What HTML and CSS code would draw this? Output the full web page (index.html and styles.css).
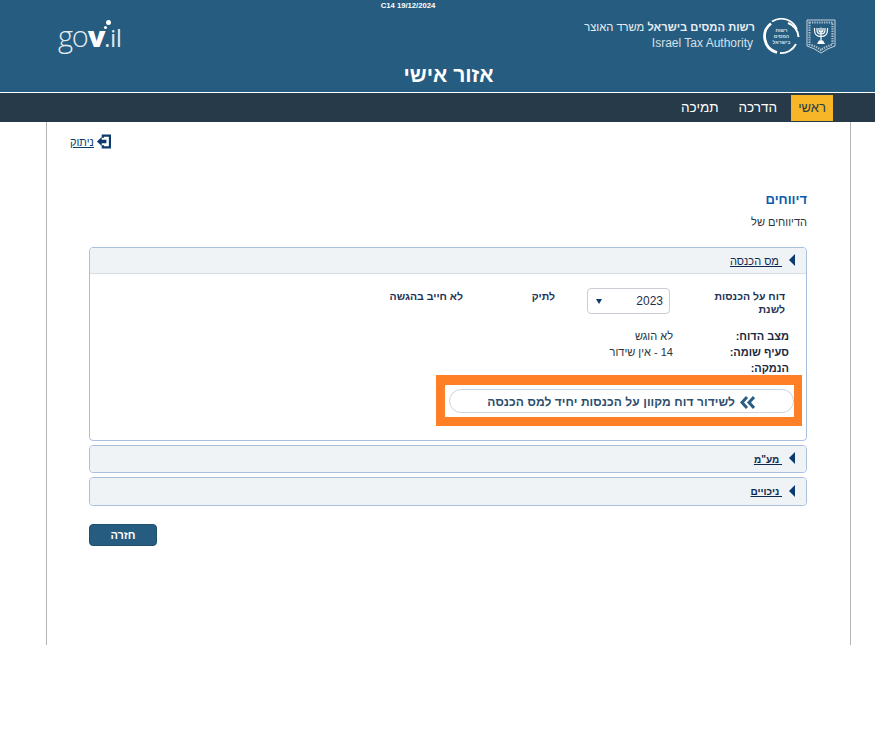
FILE: index.html
```html
<!DOCTYPE html>
<html lang="he" dir="rtl">
<head>
<meta charset="utf-8">
<title>אזור אישי</title>
<link rel="stylesheet" href="styles.css">
</head>
<body>
<header class="top">
  <div class="version" dir="ltr">C14 19/12/2024</div>
  <div class="brand">
    <div class="brand-right">
      <svg class="emblem" width="30" height="35" viewBox="0 0 30 35" aria-hidden="true">
        <path d="M1 1 H29 V27 Q22 29 15 34 Q8 29 1 27 Z" fill="none" stroke="#c3d2dd" stroke-width="1"/>
        <path d="M3.5 3.5 H26.5 V25.5 Q20 27.5 15 31 Q10 27.5 3.5 25.5 Z" fill="none" stroke="#a9bfce" stroke-width="2.2" stroke-dasharray="1.4 1"/>
        <path d="M8.5 9 V11 Q8.5 17.5 15 17.5 Q21.5 17.5 21.5 11 V9 M11 9 V11 Q11 15 15 15 Q19 15 19 11 V9 M13 9 V11 Q13 13 15 13 Q17 13 17 11 V9 M15 8.5 V22" fill="none" stroke="#fff" stroke-width="1.2"/>
        <path d="M11 25 L13 21.5 H17 L19 25 Z" fill="#fff"/>
      </svg>
      <svg class="seal" width="37" height="37" viewBox="0 0 37 37" aria-hidden="true">
        <path d="M9 3.5 A17 17 0 0 1 34 11.5" fill="none" stroke="#fff" stroke-width="1.6"/>
        <path d="M25 5 A15.5 15.5 0 0 1 35.5 19" fill="none" stroke="#fff" stroke-width="2"/>
        <path d="M8 5.5 A16.5 16.5 0 0 0 14 34.5" fill="none" stroke="#fff" stroke-width="2.8"/>
        <path d="M17 35 A16.5 16.5 0 0 0 33 26" fill="none" stroke="#fff" stroke-width="1.8"/>
        <text x="18.5" y="14" class="seal-text">רשות</text>
        <text x="18.5" y="20" class="seal-text">המסים</text>
        <text x="18.5" y="26" class="seal-text">בישראל</text>
      </svg>
      <div class="authority">
        <div class="authority-he"><b>רשות המסים בישראל</b> משרד האוצר</div>
        <div class="authority-en" dir="ltr">Israel Tax Authority</div>
      </div>
    </div>
    <div class="govil" dir="ltr">go<b>v</b><i class="dots"></i><span>.il</span></div>
  </div>
  <h1 class="title">אזור אישי</h1>
</header>
<nav class="nav">
  <a class="nav-item active">ראשי</a>
  <a class="nav-item">הדרכה</a>
  <a class="nav-item">תמיכה</a>
</nav>
<main class="page">
  <div class="logout">
    <svg width="15" height="15" viewBox="0 0 15 15" aria-hidden="true">
      <path d="M5 0 H15 V15 H5 V11.5 H7.5 V12.6 H12.6 V2.4 H7.5 V3.5 H5 Z" fill="#0b3a6e"/>
      <path d="M0 7.5 L5 2.8 V5.6 H10 V9.4 H5 V12.2 Z" fill="#0b3a6e"/>
    </svg>
    <a class="logout-link">ניתוק</a>
  </div>
  <h2 class="heading">דיווחים</h2>
  <p class="sub">הדיווחים של</p>
  <section class="panel open">
    <div class="panel-head"><i class="tri"></i><a>&nbsp;מס הכנסה</a></div>
    <div class="panel-body">
      <div class="report-row">
        <div class="report-label">דוח על הכנסות<br>לשנת</div>
        <div class="select"><span>2023</span><i class="caret"></i></div>
        <div class="status-a">לתיק</div>
        <div class="status-b">לא חייב בהגשה</div>
      </div>
      <div class="facts">
        <b>מצב הדוח:</b><span>לא הוגש</span>
        <b>סעיף שומה:</b><span>14 - אין שידור</span>
        <b>הנמקה:</b><span></span>
      </div>
      <div class="cta-frame">
        <a class="cta">
          <svg width="15" height="13" viewBox="0 0 15 13" aria-hidden="true">
            <path d="M7 1 L2 6.5 L7 12 M14 1 L9 6.5 L14 12" fill="none" stroke="#2b5d85" stroke-width="3"/>
          </svg>
          <span>לשידור דוח מקוון על הכנסות יחיד למס הכנסה</span>
        </a>
      </div>
    </div>
  </section>
  <section class="panel short"><div class="panel-head closed"><i class="tri"></i><a>&nbsp;מע"מ</a></div></section>
  <section class="panel tall"><div class="panel-head closed"><i class="tri"></i><a>&nbsp;ניכויים</a></div></section>
  <div class="actions"><button class="back">חזרה</button></div>
</main>
</body>
</html>
```
FILE: styles.css
```css
* { box-sizing: border-box; }
html, body { margin: 0; padding: 0; }
body { background: #fff; font-family: "Liberation Sans", Arial, sans-serif; color: #1f2f4a; }

.top { height: 92px; background: #265c80; color: #fff; position: relative; }
.version { text-align: center; font-size: 7.7px; font-weight: bold; line-height: 11px; height: 11px; padding-right: 59px; }
.brand { display: flex; justify-content: space-between; align-items: flex-start; padding: 7px 39px 0 58px; }
.brand-right { display: flex; align-items: flex-start; gap: 8px; }
.emblem { margin: 1px 0 0 -2px; }
.seal-text { font-size: 5px; fill: #d8e3ea; text-anchor: middle; font-weight: bold; }
.authority { color: #e6edf2; font-size: 11.2px; line-height: 16px; margin-top: 1px; }
.authority-en { font-size: 12px; text-align: right; color: #d5e0e8; padding-right: 2px; }
.govil { font-family: "Open Sans", sans-serif; font-size: 29px; line-height: 34px; letter-spacing: -1.2px; color: #e3ebf0; position: relative; font-weight: 300; margin-top: 1px; }
.govil b { font-weight: 800; color: #fff; }
.govil span { font-size: 23px; letter-spacing: 0; font-weight: 400; }
.dots { position: absolute; left: 48px; top: 1px; width: 5px; height: 5px; border-radius: 50%; background: #fff; box-shadow: -3px 5px 0 -1px #fff; }
.title { position: absolute; left: 0; right: 0; top: 62px; margin: 0; padding-left: 22px; text-align: center; font-size: 21px; line-height: 26px; font-weight: bold; }

.nav { height: 30px; border-top: 1px solid #fff; background: #263a49; display: flex; padding: 2px 42px 0 0; }
.nav-item { height: 26px; font-size: 13.5px; line-height: 26px; color: #fff; margin-left: 20px; }
.nav-item.active { width: 42px; margin-left: 14px; text-align: center; font-size: 13px; background: #f7b627; color: #263a49; }

.page { width: 805px; height: 523px; margin-right: 24px; border-left: 1px solid #b4b4b4; border-right: 1px solid #b4b4b4; padding: 12px 43px 0 42px; }
.logout { display: flex; align-items: center; gap: 3px; height: 15px; margin: 0 696px 0 -19px; }
.logout-link { font-size: 11px; color: #0b3a6e; text-decoration: underline; }
.heading { margin: 42px 0 0; font-size: 13px; line-height: 17px; color: #0b5cab; font-weight: bold; }
.sub { margin: 7px 0 0; font-size: 11px; line-height: 15px; color: #2a3440; }

.panel { border: 1px solid #a9c0dc; border-radius: 4px; margin-bottom: 4px; background: #eff3f6; }
.sub + .panel { margin-top: 17px; }
.panel.open { background: #fff; height: 194px; }
.panel-head { height: 26px; background: #eff3f6; border-bottom: 1px solid #d6dfe6; display: flex; align-items: center; gap: 7px; padding-right: 11px; border-radius: 3px 3px 0 0; }
.panel-head.closed { border-bottom: 0; border-radius: 3px; }
.panel.tall .panel-head { height: 27px; }
.panel-head a { font-size: 11px; color: #0f2a52; text-decoration: underline; }
.panel-head.closed a { font-size: 10px; font-weight: bold; }
.tri { width: 0; height: 0; border-top: 6px solid transparent; border-bottom: 6px solid transparent; border-right: 6px solid #0b3a6e; margin-top: -2px; }
.panel-body { padding-top: 16px; position: relative; }

.report-row { display: flex; align-items: flex-start; font-size: 10.5px; font-weight: bold; color: #1c3358; height: 38px; }
.report-label { width: 136px; padding-right: 21px; line-height: 13px; }
.select { width: 83px; height: 26px; margin-top: -2px; border: 1px solid #c8ced4; border-radius: 4px; display: flex; justify-content: space-between; align-items: center; padding: 0 6px 0 8px; font-size: 12px; font-weight: normal; color: #1f2f4a; }
.caret { width: 0; height: 0; border-left: 3px solid transparent; border-right: 3px solid transparent; border-top: 5px solid #0b3a6e; }
.status-a { margin-right: 32px; width: 92px; }

.facts { display: grid; grid-template-columns: 116px 1fr; grid-auto-rows: 16px; font-size: 11px; line-height: 16px; padding-right: 17px; color: #2a3440; }
.facts b { color: #1c2a40; }

.cta-frame { width: 366px; height: 51px; border-style: solid; border-color: #ff7f27; border-width: 10px 8px 9px 9px; background: #fff; padding: 4px 0 0 4px; position: absolute; top: 101px; right: 4px; }
.cta { display: flex; align-items: center; gap: 5px; height: 24px; border: 1px solid #ccd6e0; border-radius: 12px; padding: 2px 38px 0 0; font-size: 12px; font-weight: bold; color: #2f4f6f; }
.cta span { letter-spacing: .08px; }

.actions { margin-top: 18px; }
.back { display: block; width: 68px; height: 22px; margin-right: auto; background: #265c80; color: #fff; border: 1px solid #1f5070; border-radius: 4px; font: bold 11px "Liberation Sans", Arial, sans-serif; padding: 0; }
```
